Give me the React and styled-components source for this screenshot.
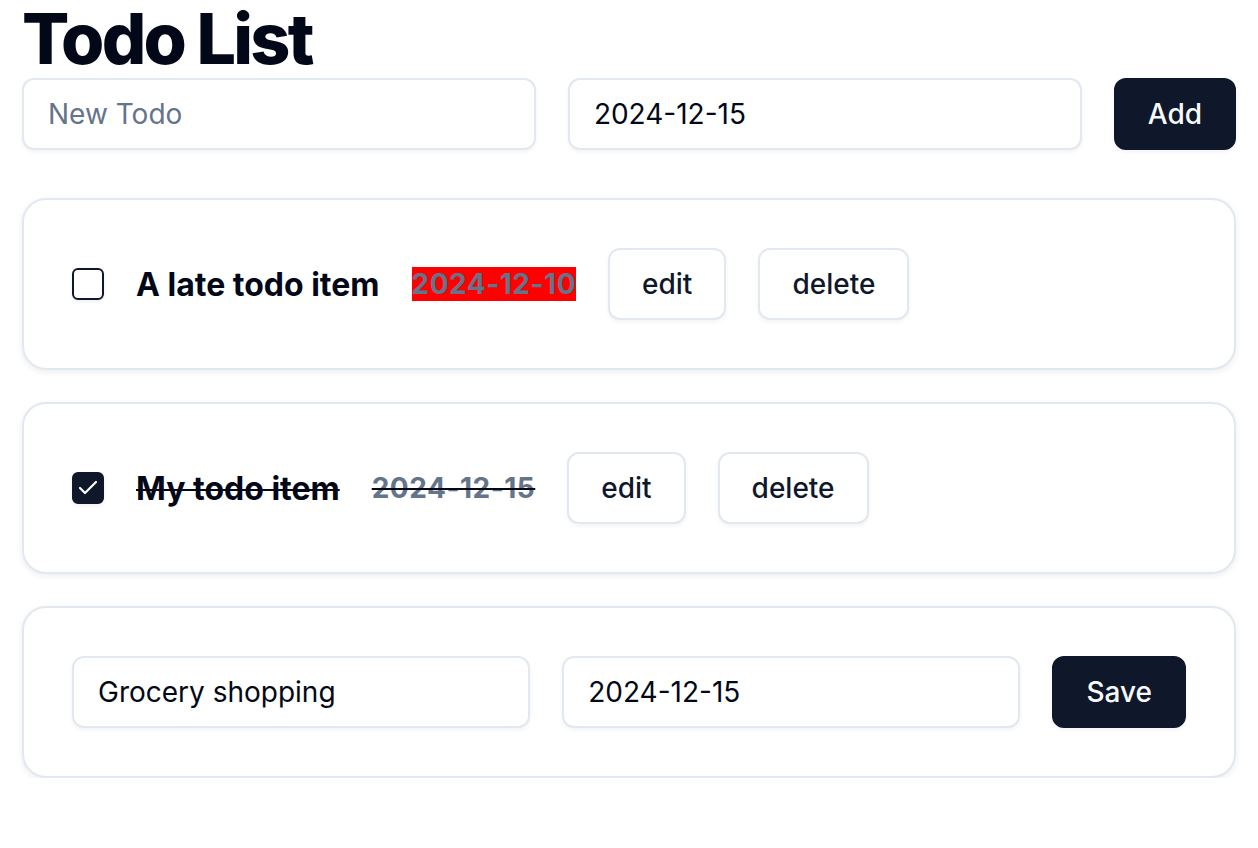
import React from "react";
import styled, { createGlobalStyle } from "styled-components";

const GlobalStyle = createGlobalStyle`
  * { box-sizing: border-box; }
  html, body { margin: 0; padding: 0; background: #ffffff; }
  body {
    font-family: Inter, "Noto Sans", "Liberation Sans", sans-serif;
    color: #020817;
    -webkit-font-smoothing: antialiased;
  }
`;

const Page = styled.main`
  padding: 0 22px;
  display: flex;
  flex-direction: column;
`;

const Title = styled.h1`
  margin: 0;
  font-size: 70px;
  line-height: 78px;
  font-weight: 800;
  letter-spacing: -2.8px;
  color: #020817;
`;

const FormRow = styled.div`
  display: flex;
  align-items: center;
  gap: 32px;
`;

const TextInput = styled.input`
  flex: 1;
  min-width: 0;
  height: 72px;
  padding: 0 24px;
  border: 2px solid #e2e8f0;
  border-radius: 12px;
  background: #ffffff;
  box-shadow: 0 2px 4px rgba(15, 23, 42, 0.05);
  font-family: inherit;
  font-size: 28px;
  color: #020817;
  outline: none;
  &::placeholder { color: #64748b; }
`;

const Button = styled.button`
  flex: none;
  height: 72px;
  padding: 0 32px;
  border-radius: 12px;
  font-family: inherit;
  font-size: 28px;
  font-weight: 500;
  cursor: pointer;
  border: 2px solid ${(p) => (p.$primary ? "#0f172a" : "#e2e8f0")};
  background: ${(p) => (p.$primary ? "#0f172a" : "#ffffff")};
  color: ${(p) => (p.$primary ? "#f8fafc" : "#0f172a")};
  box-shadow: 0 2px 4px rgba(15, 23, 42, 0.05);
`;

const List = styled.ul`
  list-style: none;
  margin: 48px 0 0;
  padding: 0;
  display: flex;
  flex-direction: column;
  gap: 32px;
`;

const Card = styled.li`
  border: 2px solid #e2e8f0;
  border-radius: 24px;
  background: #ffffff;
  box-shadow: 0 2px 6px rgba(15, 23, 42, 0.08);
  padding: 48px;
`;

const Row = styled.div`
  display: flex;
  align-items: center;
  gap: 32px;
  height: 72px;
`;

const CheckBox = styled.span`
  flex: none;
  width: 32px;
  height: 32px;
  border: 2px solid #0f172a;
  border-radius: 6px;
  background: ${(p) => (p.$checked ? "#0f172a" : "#ffffff")};
  box-shadow: 0 2px 4px rgba(15, 23, 42, 0.06);
  display: flex;
  align-items: center;
  justify-content: center;
`;

const ItemTitle = styled.span`
  font-size: 32px;
  font-weight: 700;
  color: #020817;
  text-decoration: ${(p) => (p.$done ? "line-through" : "none")};
  text-decoration-thickness: 2px;
  text-decoration-color: #020817;
`;

const DueDate = styled.span`
  font-size: 28px;
  font-weight: 700;
  letter-spacing: 0.5px;
  color: #64748b;
  background: ${(p) => (p.$late ? "#ff0000" : "transparent")};
  text-decoration: ${(p) => (p.$done ? "line-through" : "none")};
  text-decoration-thickness: 2px;
  text-decoration-color: #020817;
`;

function Check({ checked }) {
  return (
    <CheckBox $checked={checked}>
      {checked && (
        <svg width="24" height="24" viewBox="0 0 24 24" fill="none" stroke="#ffffff" strokeWidth="2.2" strokeLinecap="round" strokeLinejoin="round">
          <polyline points="20 6 9 17 4 12" />
        </svg>
      )}
    </CheckBox>
  );
}

export default function App() {
  return (
    <>
      <GlobalStyle />
      <Page>
        <Title>Todo List</Title>
        <FormRow>
          <TextInput type="text" placeholder="New Todo" />
          <TextInput type="text" defaultValue="2024-12-15" />
          <Button $primary>Add</Button>
        </FormRow>
        <List>
          <Card>
            <Row>
              <Check checked={false} />
              <ItemTitle>A late todo item</ItemTitle>
              <DueDate $late>2024-12-10</DueDate>
              <Button>edit</Button>
              <Button>delete</Button>
            </Row>
          </Card>
          <Card>
            <Row>
              <Check checked />
              <ItemTitle $done>My todo item</ItemTitle>
              <DueDate $done>2024-12-15</DueDate>
              <Button>edit</Button>
              <Button>delete</Button>
            </Row>
          </Card>
          <Card>
            <Row>
              <TextInput type="text" defaultValue="Grocery shopping" />
              <TextInput type="text" defaultValue="2024-12-15" />
              <Button $primary>Save</Button>
            </Row>
          </Card>
        </List>
      </Page>
    </>
  );
}
